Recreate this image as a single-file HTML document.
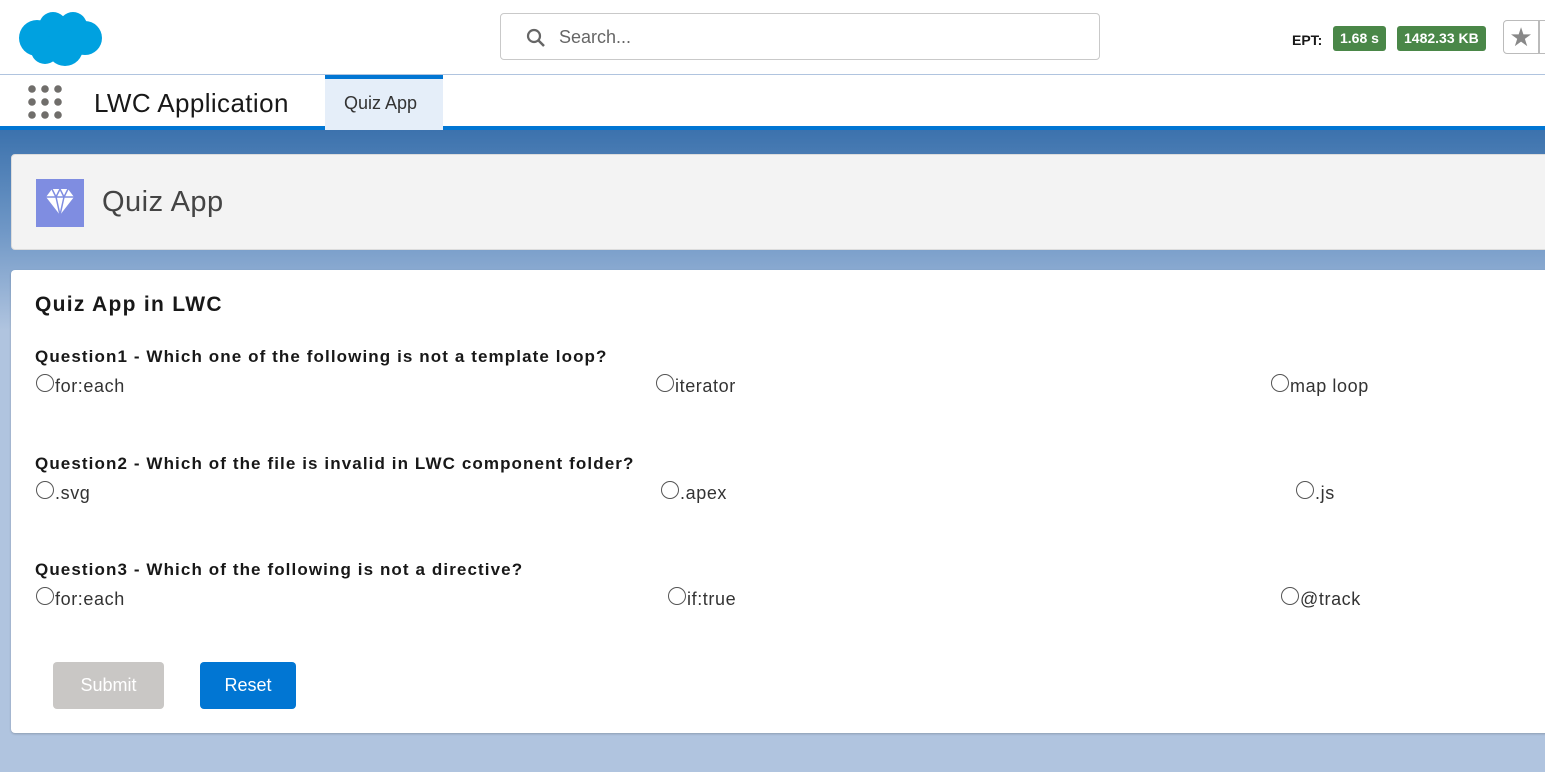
<!DOCTYPE html>
<html><head><meta charset="utf-8"><style>
*{margin:0;padding:0;box-sizing:border-box}
body{width:1545px;height:772px;overflow:hidden;font-family:"Liberation Sans",sans-serif;background:#b0c4df;position:relative;color:#181818}
.top{position:absolute;left:0;top:0;width:1545px;height:75px;background:#fff;border-bottom:1px solid #b0c4df}
.search{position:absolute;left:500px;top:13px;width:600px;height:47px;border:1px solid #c9c9c9;border-radius:4px}
.search span{position:absolute;left:58px;top:13px;font-size:18px;color:#666}
.nav{position:absolute;left:0;top:75px;width:1545px;height:55px;background:#fff;border-bottom:4px solid #0176d3}
.bg{position:absolute;left:0;top:130px;width:1545px;height:200px;background:linear-gradient(#3c72ad,#6f97c6 50%,#b0c4df)}
.hdr{position:absolute;left:11px;top:154px;width:1540px;height:96px;background:#f3f3f3;border-radius:4px;border:1px solid #dcdcdc}
.card{position:absolute;left:11px;top:270px;width:1540px;height:463px;background:#fff;border-radius:4px;box-shadow:0 1px 2px rgba(0,0,0,.2)}
.q{position:absolute;left:35px;font-weight:bold;font-size:17px;letter-spacing:1.1px}
.o{position:absolute;font-size:18px;color:#333;letter-spacing:.6px}
.o:before{content:"";display:inline-block;width:16px;height:16px;border:1px solid #555;border-radius:50%;vertical-align:2px;margin-right:1px;position:relative;top:2px}
.badge{position:absolute;top:26px;height:25px;background:#4a8748;color:#fff;font-weight:bold;font-size:14px;border-radius:3px;padding:4px 7px}
</style></head><body>
<div class="top">
<svg style="position:absolute;left:15px;top:6px" width="88" height="62" viewBox="0 0 88 62"><g fill="#00a1e0"><circle cx="22" cy="32" r="18"/><circle cx="38" cy="20" r="14"/><circle cx="58" cy="20" r="14"/><circle cx="70" cy="32" r="17"/><circle cx="50" cy="42" r="18"/><circle cx="30" cy="44" r="14"/></g></svg>
<div class="search"><svg style="position:absolute;left:25px;top:14px" width="20" height="20" viewBox="0 0 20 20"><circle cx="8" cy="8" r="6" fill="none" stroke="#666" stroke-width="2.2"/><path d="M12.5 12.5L18 18" stroke="#666" stroke-width="2.5"/></svg><span>Search...</span></div>
<div style="position:absolute;left:1292px;top:32px;font-weight:bold;font-size:14px">EPT:</div>
<div class="badge" style="left:1333px">1.68 s</div>
<div class="badge" style="left:1397px">1482.33 KB</div>
<div style="position:absolute;left:1503px;top:20px;width:36px;height:34px;border:1px solid #bbb;border-radius:4px 0 0 4px;color:#888;font-size:26px;text-align:center;line-height:32px">★</div>
<div style="position:absolute;left:1539px;top:20px;width:10px;height:34px;border:1px solid #bbb"></div>
</div>
<div class="nav">
<svg style="position:absolute;left:28px;top:10px" width="34" height="34"><g fill="#706e6b"><circle cx="4" cy="4" r="3.8"/><circle cx="17" cy="4" r="3.8"/><circle cx="30" cy="4" r="3.8"/><circle cx="4" cy="17" r="3.8"/><circle cx="17" cy="17" r="3.8"/><circle cx="30" cy="17" r="3.8"/><circle cx="4" cy="30" r="3.8"/><circle cx="17" cy="30" r="3.8"/><circle cx="30" cy="30" r="3.8"/></g></svg>
<div style="position:absolute;left:94px;top:13px;font-size:26px;letter-spacing:.4px">LWC Application</div>
<div style="position:absolute;left:325px;top:0;width:118px;height:55px;background:#e5eef9;border-top:4px solid #0176d3;font-size:18px;padding:14px 0 0 19px;color:#333">Quiz App</div>
</div>
<div class="bg"></div>
<div class="hdr">
<div style="position:absolute;left:24px;top:24px;width:48px;height:48px;background:#7f8de1"><svg width="48" height="48" viewBox="0 0 48 48"><path d="M10 18L16 10H32L38 18L24 36Z" fill="#fff"/><path d="M10 18H38M16 10L20 18L24 36L28 18L32 10M20 18L24 10L28 18" stroke="#7f8de1" stroke-width="1.5" fill="none"/></svg></div>
<div style="position:absolute;left:90px;top:31px;font-size:29px;color:#444;letter-spacing:.5px">Quiz App</div>
</div>
<div class="card"></div>
<div style="position:absolute;left:35px;top:293px;font-size:21px;font-weight:bold;letter-spacing:1.3px">Quiz App in LWC</div>
<div class="q" style="top:347px">Question1 - Which one of the following is not a template loop?</div>
<div class="o" style="left:36px;top:372px">for:each</div>
<div class="o" style="left:656px;top:372px">iterator</div>
<div class="o" style="left:1271px;top:372px">map loop</div>
<div class="q" style="top:454px">Question2 - Which of the file is invalid in LWC component folder?</div>
<div class="o" style="left:36px;top:479px">.svg</div>
<div class="o" style="left:661px;top:479px">.apex</div>
<div class="o" style="left:1296px;top:479px">.js</div>
<div class="q" style="top:560px">Question3 - Which of the following is not a directive?</div>
<div class="o" style="left:36px;top:585px">for:each</div>
<div class="o" style="left:668px;top:585px">if:true</div>
<div class="o" style="left:1281px;top:585px">@track</div>
<div style="position:absolute;left:53px;top:662px;width:111px;height:47px;background:#c9c7c5;border-radius:4px;color:#fff;font-size:18px;text-align:center;line-height:47px">Submit</div>
<div style="position:absolute;left:200px;top:662px;width:96px;height:47px;background:#0176d3;border-radius:4px;color:#fff;font-size:18px;text-align:center;line-height:47px">Reset</div>
</body></html>
